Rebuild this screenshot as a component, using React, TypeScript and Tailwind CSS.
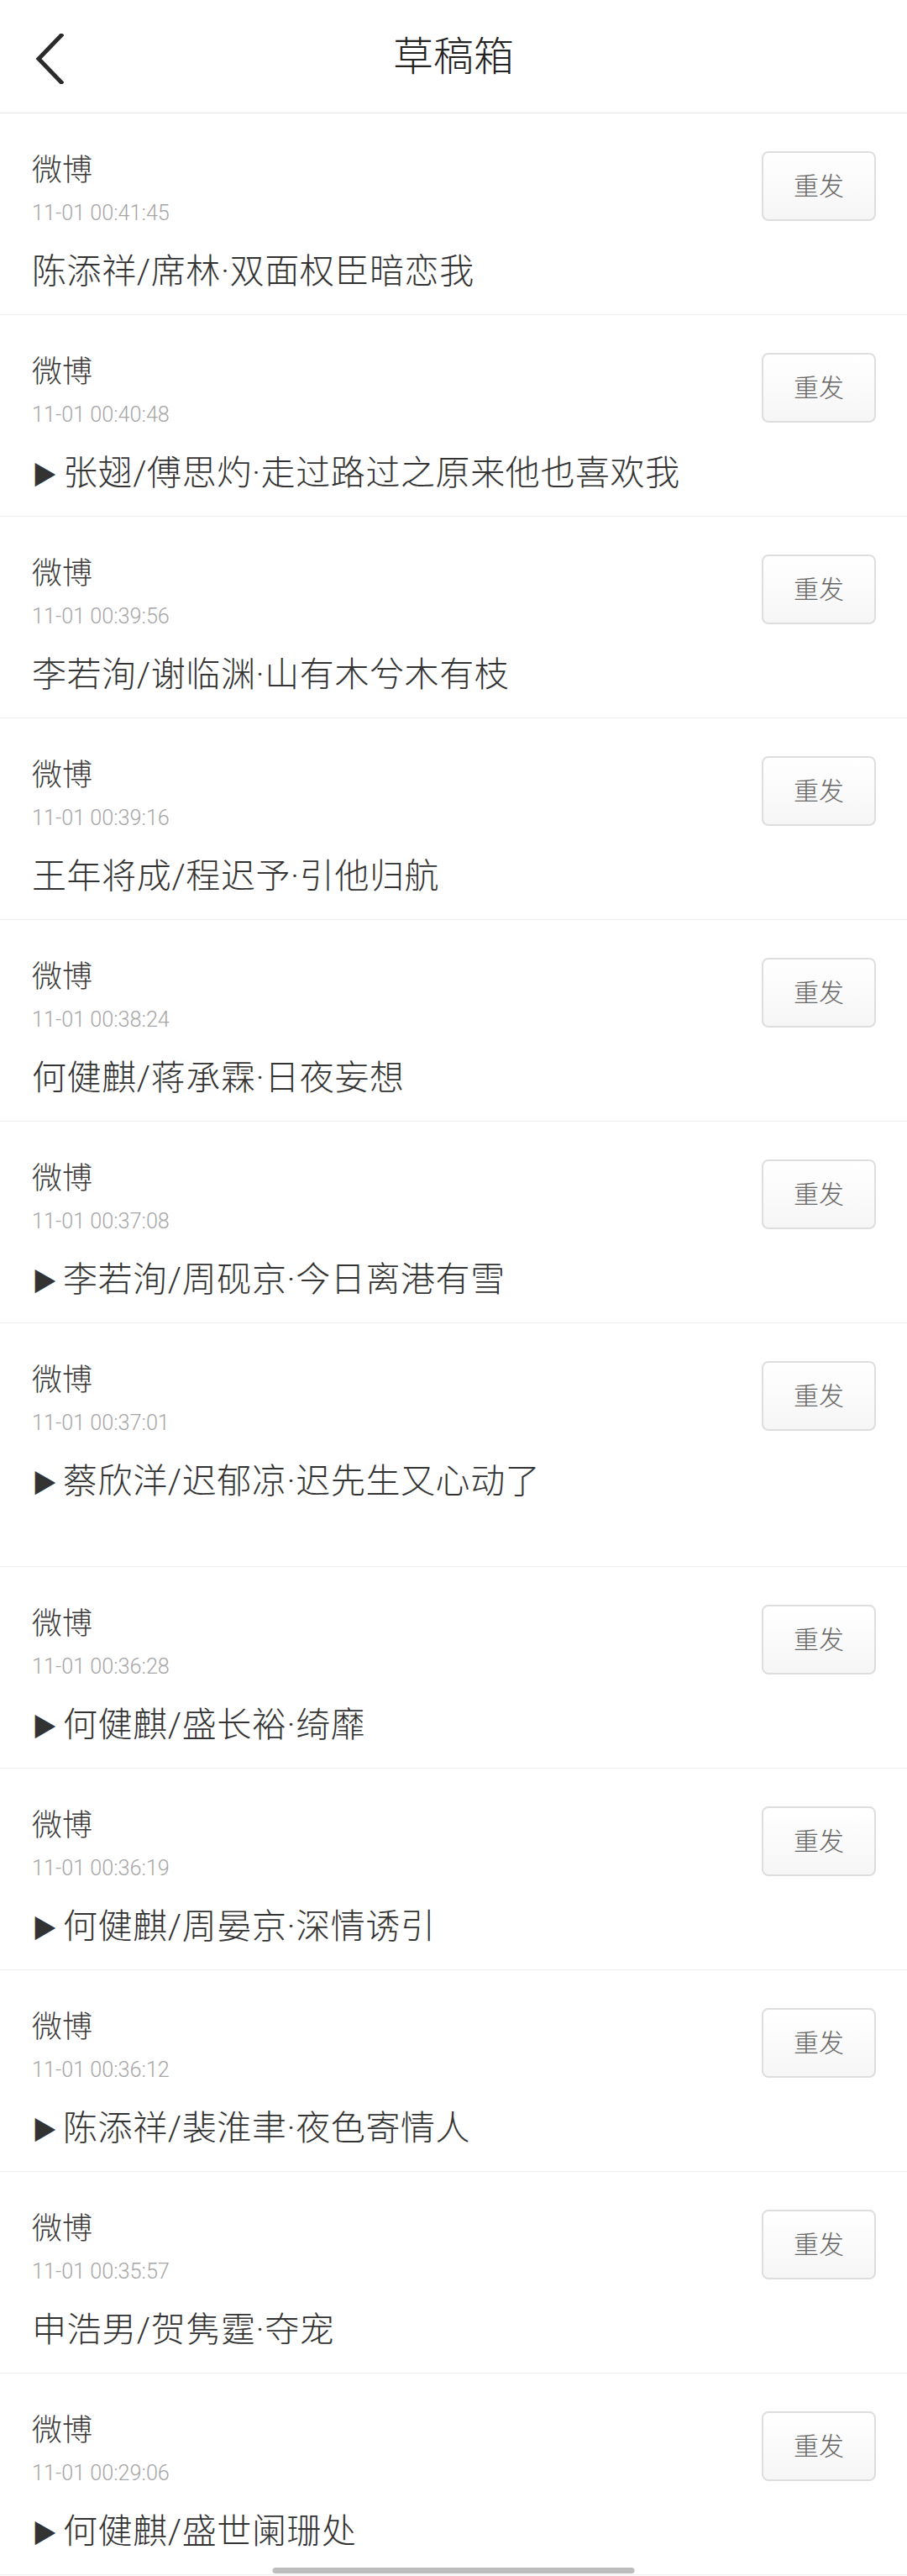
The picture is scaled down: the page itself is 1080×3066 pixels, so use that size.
import React from 'react';

type Draft = {
  time: string;
  title: string;
  mark?: boolean;
  tall?: boolean;
};

const DRAFTS: Draft[] = [
  { time: '11-01 00:41:45', title: '陈添祥/席林·双面权臣暗恋我' },
  { time: '11-01 00:40:48', title: '张翅/傅思灼·走过路过之原来他也喜欢我', mark: true },
  { time: '11-01 00:39:56', title: '李若洵/谢临渊·山有木兮木有枝' },
  { time: '11-01 00:39:16', title: '王年将成/程迟予·引他归航' },
  { time: '11-01 00:38:24', title: '何健麒/蒋承霖·日夜妄想' },
  { time: '11-01 00:37:08', title: '李若洵/周砚京·今日离港有雪', mark: true },
  { time: '11-01 00:37:01', title: '蔡欣洋/迟郁凉·迟先生又心动了', mark: true, tall: true },
  { time: '11-01 00:36:28', title: '何健麒/盛长裕·绮靡', mark: true },
  { time: '11-01 00:36:19', title: '何健麒/周晏京·深情诱引', mark: true },
  { time: '11-01 00:36:12', title: '陈添祥/裴淮聿·夜色寄情人', mark: true },
  { time: '11-01 00:35:57', title: '申浩男/贺隽霆·夺宠' },
  { time: '11-01 00:29:06', title: '何健麒/盛世阑珊处', mark: true },
];

function DraftRow({ draft }: { draft: Draft }) {
  return (
    <div
      className={`flex shrink-0 justify-between border-b border-[#eeeeee] pl-[38px] pr-[37px] ${
        draft.tall ? 'h-[290px]' : 'h-[240px]'
      }`}
    >
      <div className="flex flex-col">
        <div className="mt-[50px] text-[36px] leading-[36px] text-[#3a3a3a]">微博</div>
        <div className="mt-[19px] h-[26px] origin-left scale-x-[0.97] font-['Roboto',sans-serif] text-[26px] leading-[26px] text-[#a6a6a6] whitespace-nowrap">
          {draft.time}
        </div>
        <div className="mt-[37px] flex items-center text-[41px] leading-[40px] tracking-[0.6px] text-[#333333] whitespace-nowrap">
          {draft.mark && (
            <span className="mr-[4px] inline-block w-[33px] font-['Noto_Sans_CJK_SC',sans-serif] text-[30px] leading-[40px] text-[#333333]">
              ▶
            </span>
          )}
          <span>{draft.title}</span>
        </div>
      </div>
      <button className="mt-[45px] flex h-[83px] w-[136px] items-center justify-center rounded-[8px] border-2 border-[#dedede] bg-gradient-to-b from-white to-[#f6f6f6] text-[30px] text-[#666666]">
        重发
      </button>
    </div>
  );
}

export default function App() {
  return (
    <div className="relative h-[3066px] w-[1080px] overflow-hidden bg-white font-['Roboto','Noto_Sans_CJK_SC',sans-serif] font-light">
      {/* Header */}
      <div className="relative flex h-[135px] items-center justify-center border-b border-[#e8e8e8]">
        <button className="absolute left-[36px] top-[40px] flex h-[60px] w-[44px] items-center justify-center">
          <svg width="36" height="60" viewBox="0 0 36 60" fill="none">
            <path d="M33 2 L6 30 L33 58" stroke="#2b2b2b" strokeWidth="5" strokeLinecap="square" strokeLinejoin="miter" />
          </svg>
        </button>
        <h1 className="pt-[2px] text-[48px] font-light leading-none text-[#222222]">草稿箱</h1>
      </div>

      {/* Draft list */}
      <div className="flex flex-col">
        {DRAFTS.map((d, i) => (
          <DraftRow key={i} draft={d} />
        ))}
      </div>

      {/* Home indicator */}
      <div className="absolute bottom-[3px] left-1/2 h-[7px] w-[431px] -translate-x-1/2 rounded-full bg-[#bdbdbd]" />
    </div>
  );
}
